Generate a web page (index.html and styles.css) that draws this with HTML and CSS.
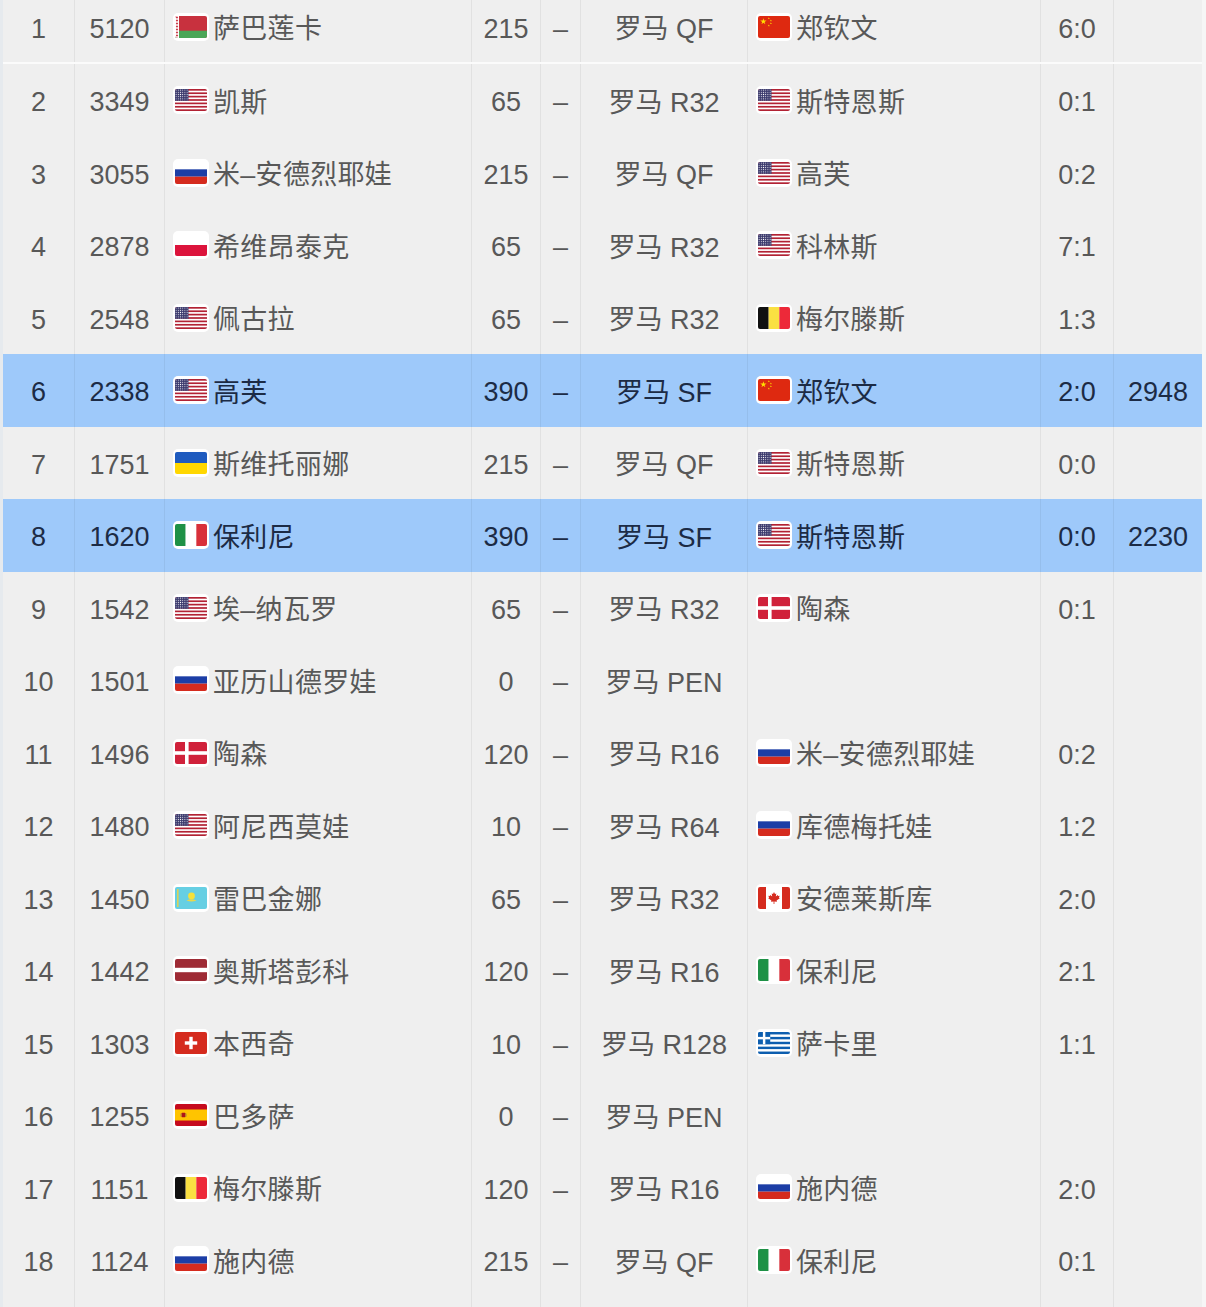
FILE: index.html
```html
<!DOCTYPE html>
<html lang="zh-CN">
<head>
<meta charset="utf-8">
<title>排名</title>
<link rel="stylesheet" href="styles.css">
</head>
<body>
<svg class="sprite" width="0" height="0" aria-hidden="true">
  <defs>
    <polygon id="st" points="0,-1 0.2245,-0.309 0.951,-0.309 0.363,0.118 0.588,0.809 0,0.382 -0.588,0.809 -0.363,0.118 -0.951,-0.309 -0.2245,-0.309"/>
    <pattern id="dots" width="2.2" height="2.2" patternUnits="userSpaceOnUse">
      <rect width="2.2" height="2.2" fill="#3c3b6e"/>
      <circle cx="1.1" cy="1.1" r="0.5" fill="#fff"/>
    </pattern>
    <pattern id="orn" width="4" height="3" patternUnits="userSpaceOnUse">
      <rect width="4" height="3" fill="#fff"/>
      <polygon points="2,0.2 3.2,1.5 2,2.8 0.8,1.5" fill="#c8313e"/>
    </pattern>
    <symbol id="by" viewBox="0 0 32 22" preserveAspectRatio="none">
      <rect width="32" height="22" fill="#c8313e"/>
      <rect y="14.7" width="32" height="7.3" fill="#4aa657"/>
      <rect width="4" height="22" fill="url(#orn)"/>
    </symbol>
    <symbol id="us" viewBox="0 0 32 22" preserveAspectRatio="none">
      <rect width="32" height="22" fill="#b22234"/>
      <rect y="1.69" width="32" height="1.69" fill="#fff"/>
      <rect y="5.08" width="32" height="1.69" fill="#fff"/>
      <rect y="8.46" width="32" height="1.69" fill="#fff"/>
      <rect y="11.85" width="32" height="1.69" fill="#fff"/>
      <rect y="15.23" width="32" height="1.69" fill="#fff"/>
      <rect y="18.62" width="32" height="1.69" fill="#fff"/>
      <rect width="13.5" height="11.85" fill="url(#dots)"/>
    </symbol>
    <symbol id="ru" viewBox="0 0 32 22" preserveAspectRatio="none">
      <rect width="32" height="22" fill="#fff"/>
      <rect y="7.33" width="32" height="7.34" fill="#1c3ea6"/>
      <rect y="14.67" width="32" height="7.33" fill="#d52b1e"/>
    </symbol>
    <symbol id="pl" viewBox="0 0 32 22" preserveAspectRatio="none">
      <rect width="32" height="22" fill="#fff"/>
      <rect y="11" width="32" height="11" fill="#dc143c"/>
    </symbol>
    <symbol id="cn" viewBox="0 0 32 22" preserveAspectRatio="none">
      <rect width="32" height="22" fill="#de2910"/>
      <use href="#st" transform="translate(5.4 5.6) scale(3.3)" fill="#ffde00"/>
      <use href="#st" transform="translate(10.8 2.3) scale(1.1)" fill="#ffde00"/>
      <use href="#st" transform="translate(12.9 4.5) scale(1.1)" fill="#ffde00"/>
      <use href="#st" transform="translate(12.9 7.4) scale(1.1)" fill="#ffde00"/>
      <use href="#st" transform="translate(10.8 9.6) scale(1.1)" fill="#ffde00"/>
    </symbol>
    <symbol id="be" viewBox="0 0 32 22" preserveAspectRatio="none">
      <rect width="10.67" height="22" fill="#111"/>
      <rect x="10.67" width="10.66" height="22" fill="#fae042"/>
      <rect x="21.33" width="10.67" height="22" fill="#ed2939"/>
    </symbol>
    <symbol id="ua" viewBox="0 0 32 22" preserveAspectRatio="none">
      <rect width="32" height="11" fill="#1f5bbf"/>
      <rect y="11" width="32" height="11" fill="#ffd700"/>
    </symbol>
    <symbol id="it" viewBox="0 0 32 22" preserveAspectRatio="none">
      <rect width="10.67" height="22" fill="#1e9146"/>
      <rect x="10.67" width="10.66" height="22" fill="#fff"/>
      <rect x="21.33" width="10.67" height="22" fill="#d8303a"/>
    </symbol>
    <symbol id="dk" viewBox="0 0 32 22" preserveAspectRatio="none">
      <rect width="32" height="22" fill="#d0213a"/>
      <rect x="10" width="3.6" height="22" fill="#fff"/>
      <rect y="9.2" width="32" height="3.6" fill="#fff"/>
    </symbol>
    <symbol id="kz" viewBox="0 0 32 22" preserveAspectRatio="none">
      <rect width="32" height="22" fill="#66cfe3"/>
      <circle cx="16.5" cy="9" r="3.4" fill="#f4e13a"/>
      <path d="M11.5 13.5 Q16.5 11 21.5 13.5 Q16.5 15.5 11.5 13.5 Z" fill="#e9d84a"/>
      <rect x="2" y="2" width="1.6" height="18" fill="#d9d25a"/>
    </symbol>
    <symbol id="ca" viewBox="0 0 32 22" preserveAspectRatio="none">
      <rect width="32" height="22" fill="#fff"/>
      <rect width="8" height="22" fill="#d52b1e"/>
      <rect x="24" width="8" height="22" fill="#d52b1e"/>
      <polygon fill="#d52b1e" points="16,5 17,7 18.3,6.6 17.8,9.4 19.8,8 20.2,9 21.6,8.8 21,10.8 21.8,11.2 18.6,13.6 19,14.8 16.4,14.4 16.4,17 15.6,17 15.6,14.4 13,14.8 13.4,13.6 10.2,11.2 11,10.8 10.4,8.8 11.8,9 12.2,8 14.2,9.4 13.7,6.6 15,7"/>
    </symbol>
    <symbol id="lv" viewBox="0 0 32 22" preserveAspectRatio="none">
      <rect width="32" height="22" fill="#9e2b35"/>
      <rect y="8.8" width="32" height="4.4" fill="#fff"/>
    </symbol>
    <symbol id="ch" viewBox="0 0 32 22" preserveAspectRatio="none">
      <rect width="32" height="22" fill="#d52b1e"/>
      <rect x="14.3" y="4.8" width="3.4" height="12.4" fill="#fff"/>
      <rect x="9.8" y="9.3" width="12.4" height="3.4" fill="#fff"/>
    </symbol>
    <symbol id="es" viewBox="0 0 32 22" preserveAspectRatio="none">
      <rect width="32" height="22" fill="#c60b1e"/>
      <rect y="5.5" width="32" height="11" fill="#ffc400"/>
      <rect x="6.5" y="8.8" width="4" height="4.4" rx="0.6" fill="#ad1519"/>
      <rect x="5.5" y="9.5" width="1" height="3.2" fill="#aa8a3c"/>
      <rect x="10.5" y="9.5" width="1" height="3.2" fill="#aa8a3c"/>
    </symbol>
    <symbol id="gr" viewBox="0 0 32 22" preserveAspectRatio="none">
      <rect width="32" height="22" fill="#0d5eaf"/>
      <rect y="2.44" width="32" height="2.44" fill="#fff"/>
      <rect y="7.33" width="32" height="2.44" fill="#fff"/>
      <rect y="12.22" width="32" height="2.44" fill="#fff"/>
      <rect y="17.11" width="32" height="2.44" fill="#fff"/>
      <rect width="12.22" height="12.22" fill="#0d5eaf"/>
      <rect x="4.9" width="2.44" height="12.22" fill="#fff"/>
      <rect y="4.9" width="12.22" height="2.44" fill="#fff"/>
    </symbol>
  </defs>
</svg>

<div class="table">
  <div class="row sep">
    <div class="c rk">1</div><div class="c pts">5120</div>
    <div class="c nm"><span class="flag"><svg><use href="#by"/></svg></span>萨巴莲卡</div>
    <div class="c">215</div><div class="c">–</div><div class="c">罗马 QF</div>
    <div class="c nm"><span class="flag"><svg><use href="#cn"/></svg></span>郑钦文</div>
    <div class="c">6:0</div><div class="c"></div>
  </div>
  <div class="row">
    <div class="c rk">2</div><div class="c pts">3349</div>
    <div class="c nm"><span class="flag"><svg><use href="#us"/></svg></span>凯斯</div>
    <div class="c">65</div><div class="c">–</div><div class="c">罗马 R32</div>
    <div class="c nm"><span class="flag"><svg><use href="#us"/></svg></span>斯特恩斯</div>
    <div class="c">0:1</div><div class="c"></div>
  </div>
  <div class="row">
    <div class="c rk">3</div><div class="c pts">3055</div>
    <div class="c nm"><span class="flag"><svg><use href="#ru"/></svg></span>米–安德烈耶娃</div>
    <div class="c">215</div><div class="c">–</div><div class="c">罗马 QF</div>
    <div class="c nm"><span class="flag"><svg><use href="#us"/></svg></span>高芙</div>
    <div class="c">0:2</div><div class="c"></div>
  </div>
  <div class="row">
    <div class="c rk">4</div><div class="c pts">2878</div>
    <div class="c nm"><span class="flag"><svg><use href="#pl"/></svg></span>希维昂泰克</div>
    <div class="c">65</div><div class="c">–</div><div class="c">罗马 R32</div>
    <div class="c nm"><span class="flag"><svg><use href="#us"/></svg></span>科林斯</div>
    <div class="c">7:1</div><div class="c"></div>
  </div>
  <div class="row">
    <div class="c rk">5</div><div class="c pts">2548</div>
    <div class="c nm"><span class="flag"><svg><use href="#us"/></svg></span>佩古拉</div>
    <div class="c">65</div><div class="c">–</div><div class="c">罗马 R32</div>
    <div class="c nm"><span class="flag"><svg><use href="#be"/></svg></span>梅尔滕斯</div>
    <div class="c">1:3</div><div class="c"></div>
  </div>
  <div class="row hl">
    <div class="c rk">6</div><div class="c pts">2338</div>
    <div class="c nm"><span class="flag"><svg><use href="#us"/></svg></span>高芙</div>
    <div class="c">390</div><div class="c">–</div><div class="c">罗马 SF</div>
    <div class="c nm"><span class="flag"><svg><use href="#cn"/></svg></span>郑钦文</div>
    <div class="c">2:0</div><div class="c">2948</div>
  </div>
  <div class="row">
    <div class="c rk">7</div><div class="c pts">1751</div>
    <div class="c nm"><span class="flag"><svg><use href="#ua"/></svg></span>斯维托丽娜</div>
    <div class="c">215</div><div class="c">–</div><div class="c">罗马 QF</div>
    <div class="c nm"><span class="flag"><svg><use href="#us"/></svg></span>斯特恩斯</div>
    <div class="c">0:0</div><div class="c"></div>
  </div>
  <div class="row hl">
    <div class="c rk">8</div><div class="c pts">1620</div>
    <div class="c nm"><span class="flag"><svg><use href="#it"/></svg></span>保利尼</div>
    <div class="c">390</div><div class="c">–</div><div class="c">罗马 SF</div>
    <div class="c nm"><span class="flag"><svg><use href="#us"/></svg></span>斯特恩斯</div>
    <div class="c">0:0</div><div class="c">2230</div>
  </div>
  <div class="row">
    <div class="c rk">9</div><div class="c pts">1542</div>
    <div class="c nm"><span class="flag"><svg><use href="#us"/></svg></span>埃–纳瓦罗</div>
    <div class="c">65</div><div class="c">–</div><div class="c">罗马 R32</div>
    <div class="c nm"><span class="flag"><svg><use href="#dk"/></svg></span>陶森</div>
    <div class="c">0:1</div><div class="c"></div>
  </div>
  <div class="row">
    <div class="c rk">10</div><div class="c pts">1501</div>
    <div class="c nm"><span class="flag"><svg><use href="#ru"/></svg></span>亚历山德罗娃</div>
    <div class="c">0</div><div class="c">–</div><div class="c">罗马 PEN</div>
    <div class="c nm"></div>
    <div class="c"></div><div class="c"></div>
  </div>
  <div class="row">
    <div class="c rk">11</div><div class="c pts">1496</div>
    <div class="c nm"><span class="flag"><svg><use href="#dk"/></svg></span>陶森</div>
    <div class="c">120</div><div class="c">–</div><div class="c">罗马 R16</div>
    <div class="c nm"><span class="flag"><svg><use href="#ru"/></svg></span>米–安德烈耶娃</div>
    <div class="c">0:2</div><div class="c"></div>
  </div>
  <div class="row">
    <div class="c rk">12</div><div class="c pts">1480</div>
    <div class="c nm"><span class="flag"><svg><use href="#us"/></svg></span>阿尼西莫娃</div>
    <div class="c">10</div><div class="c">–</div><div class="c">罗马 R64</div>
    <div class="c nm"><span class="flag"><svg><use href="#ru"/></svg></span>库德梅托娃</div>
    <div class="c">1:2</div><div class="c"></div>
  </div>
  <div class="row">
    <div class="c rk">13</div><div class="c pts">1450</div>
    <div class="c nm"><span class="flag"><svg><use href="#kz"/></svg></span>雷巴金娜</div>
    <div class="c">65</div><div class="c">–</div><div class="c">罗马 R32</div>
    <div class="c nm"><span class="flag"><svg><use href="#ca"/></svg></span>安德莱斯库</div>
    <div class="c">2:0</div><div class="c"></div>
  </div>
  <div class="row">
    <div class="c rk">14</div><div class="c pts">1442</div>
    <div class="c nm"><span class="flag"><svg><use href="#lv"/></svg></span>奥斯塔彭科</div>
    <div class="c">120</div><div class="c">–</div><div class="c">罗马 R16</div>
    <div class="c nm"><span class="flag"><svg><use href="#it"/></svg></span>保利尼</div>
    <div class="c">2:1</div><div class="c"></div>
  </div>
  <div class="row">
    <div class="c rk">15</div><div class="c pts">1303</div>
    <div class="c nm"><span class="flag"><svg><use href="#ch"/></svg></span>本西奇</div>
    <div class="c">10</div><div class="c">–</div><div class="c">罗马 R128</div>
    <div class="c nm"><span class="flag"><svg><use href="#gr"/></svg></span>萨卡里</div>
    <div class="c">1:1</div><div class="c"></div>
  </div>
  <div class="row">
    <div class="c rk">16</div><div class="c pts">1255</div>
    <div class="c nm"><span class="flag"><svg><use href="#es"/></svg></span>巴多萨</div>
    <div class="c">0</div><div class="c">–</div><div class="c">罗马 PEN</div>
    <div class="c nm"></div>
    <div class="c"></div><div class="c"></div>
  </div>
  <div class="row">
    <div class="c rk">17</div><div class="c pts">1151</div>
    <div class="c nm"><span class="flag"><svg><use href="#be"/></svg></span>梅尔滕斯</div>
    <div class="c">120</div><div class="c">–</div><div class="c">罗马 R16</div>
    <div class="c nm"><span class="flag"><svg><use href="#ru"/></svg></span>施内德</div>
    <div class="c">2:0</div><div class="c"></div>
  </div>
  <div class="row">
    <div class="c rk">18</div><div class="c pts">1124</div>
    <div class="c nm"><span class="flag"><svg><use href="#ru"/></svg></span>施内德</div>
    <div class="c">215</div><div class="c">–</div><div class="c">罗马 QF</div>
    <div class="c nm"><span class="flag"><svg><use href="#it"/></svg></span>保利尼</div>
    <div class="c">0:1</div><div class="c"></div>
  </div>
  <div class="row">
    <div class="c rk"></div><div class="c pts"></div><div class="c nm"></div>
    <div class="c"></div><div class="c"></div><div class="c"></div>
    <div class="c nm"></div><div class="c"></div><div class="c"></div>
  </div>
</div>
</body>
</html>
```

FILE: styles.css
```css
html, body {
  margin: 0;
  padding: 0;
}
body {
  background: #f6f6f6;
  overflow: hidden;
  font-family: "Liberation Sans", "Noto Sans CJK SC", sans-serif;
  font-size: 27px;
  color: #585858;
}
.sprite {
  position: absolute;
  width: 0;
  height: 0;
}
.table {
  margin-top: -8.5px;
  width: 1202px;
  border-left: 3px solid #e6eaee;
  box-sizing: border-box;
  background: #efefef;
}
.row {
  display: grid;
  grid-template-columns: 71px 90px 307px 69px 40px 167px 293px 73px 89px;
  height: 72.5px;
  background: #efefef;
}
.row.sep {
  border-bottom: 2px solid #fbfbfb;
  box-sizing: border-box;
}
.row.hl {
  background: #9ec9fa;
  color: #1c2b45;
}
.c {
  display: flex;
  align-items: center;
  justify-content: center;
  white-space: nowrap;
  border-left: 1px solid rgba(0, 0, 0, 0.055);
  box-sizing: border-box;
}
/* cells holding only Latin digits: align their baseline with the CJK cells */
.c:nth-child(1),
.c:nth-child(2),
.c:nth-child(4),
.c:nth-child(5),
.c:nth-child(8),
.c:nth-child(9) {
  padding-top: 5px;
}
.c.rk {
  border-left: 0;
}
.c.nm {
  justify-content: flex-start;
  padding-left: 8px;
  gap: 4px;
  letter-spacing: 0.3px;
}
.flag {
  display: inline-flex;
  background: #fff;
  padding: 3px 2px;
  border-radius: 5px;
  flex: none;
}
.flag svg {
  display: block;
  width: 32px;
  height: 22px;
  border-radius: 2px;
}
```
